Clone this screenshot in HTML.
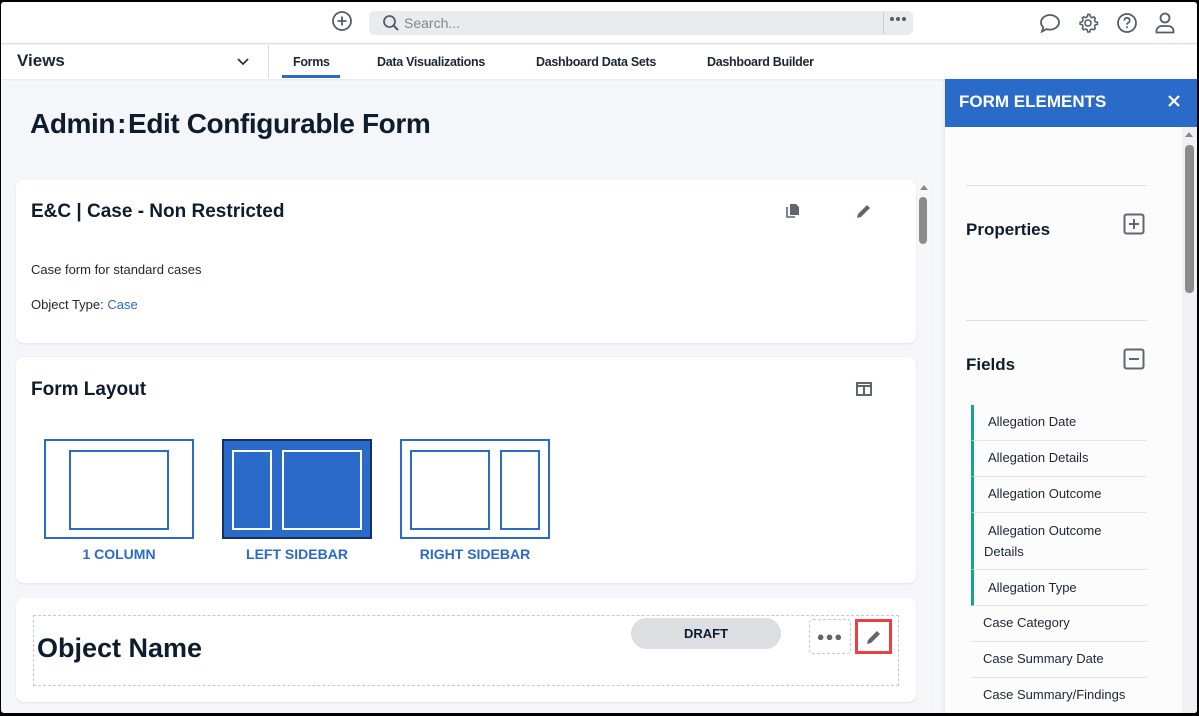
<!DOCTYPE html>
<html><head><meta charset="utf-8"><style>
*{box-sizing:border-box;margin:0;padding:0}
body{width:1199px;height:716px;background:#000;position:relative;overflow:hidden;font-family:"Liberation Sans",sans-serif;color:#0f1c2e}
#pg{position:absolute;left:1px;top:2px;width:1196px;height:711px;background:#f5f6f9;overflow:hidden;border-radius:3px}
.abs{position:absolute}
#top{left:0;top:0;width:1196px;height:42px;background:#fff;border-bottom:1px solid #dcdde0}
#nav{left:0;top:43px;width:1196px;height:34px;background:#fff;box-shadow:0 1px 2px rgba(0,0,0,.06)}
.tab{position:absolute;top:10px;font-size:12.5px;font-weight:bold;color:#1c2633;letter-spacing:-.3px}
.card{position:absolute;left:15px;width:900px;background:#fff;border-radius:8px;box-shadow:0 1px 2px rgba(0,0,0,.08)}
.lay{position:absolute;top:437px;width:150px;height:100px;border:2px solid #2a6ac8;background:#fff}
.lab{position:absolute;top:544px;font-size:14px;font-weight:bold;color:#2a6ac8;text-align:center;width:150px}
.in{position:absolute;border:2px solid #2a6ac8}
.fld{position:absolute;left:970px;width:176px;border-bottom:1px solid #e3e4e7;font-size:13px;color:#1c2633;padding-left:14px}
.g{border-left:3px solid #14a38b}
</style></head><body><div id="pg">
<div id="top" class="abs">
<svg class="abs" style="left:330px;top:8px" width="22" height="22" viewBox="0 0 22 22"><circle cx="11" cy="11" r="9" fill="none" stroke="#555c66" stroke-width="1.8"/><path d="M11 6.5v9M6.5 11h9" stroke="#555c66" stroke-width="1.8"/></svg>
<div class="abs" style="left:368px;top:9px;width:544px;height:24px;background:#e9ebee;border-radius:5px"></div>
<svg class="abs" style="left:381px;top:12px" width="18" height="18" viewBox="0 0 18 18"><circle cx="7.5" cy="7.5" r="5.5" fill="none" stroke="#555c66" stroke-width="1.8"/><path d="M11.5 11.5l4.5 4.5" stroke="#555c66" stroke-width="2"/></svg>
<div class="abs" style="left:403px;top:13px;font-size:14px;color:#80868f">Search...</div>
<div class="abs" style="left:882px;top:10px;width:1px;height:22px;background:#c9ccd1"></div>
<div class="abs" style="left:889px;top:15px;width:18px;height:4px">
<span class="abs" style="left:0;top:0;width:4px;height:4px;border-radius:2px;background:#555c66"></span>
<span class="abs" style="left:6px;top:0;width:4px;height:4px;border-radius:2px;background:#555c66"></span>
<span class="abs" style="left:12px;top:0;width:4px;height:4px;border-radius:2px;background:#555c66"></span></div>
<svg class="abs" style="left:1037px;top:10px" width="24" height="22" viewBox="0 0 24 22"><path d="M12 3c5 0 9 3.3 9 7.3s-4 7.3-9 7.3c-1.2 0-2.4-.2-3.4-.5L4 19.5l1.3-4C3.8 14 3 12.2 3 10.3 3 6.3 7 3 12 3z" fill="none" stroke="#555c66" stroke-width="1.8"/></svg>
<svg class="abs" style="left:1076px;top:10px" width="22" height="22" viewBox="0 0 24 24"><path d="M12 2.5l2 .3.6 2.4 1.6.9 2.3-.8 1.4 1.5-.8 2.3.8 1.6 2.4.6v2.2l-2.4.6-.8 1.6.8 2.3-1.5 1.4-2.3-.8-1.6.8-.6 2.4h-2.2l-.6-2.4-1.6-.8-2.3.8-1.4-1.5.8-2.3-.8-1.6-2.4-.6v-2.2l2.4-.6.8-1.6-.8-2.3 1.5-1.4 2.3.8 1.6-.9.6-2.4z" fill="none" stroke="#555c66" stroke-width="1.7"/><circle cx="12" cy="12" r="3.3" fill="none" stroke="#555c66" stroke-width="1.7"/></svg>
<svg class="abs" style="left:1115px;top:10px" width="22" height="22" viewBox="0 0 22 22"><circle cx="11" cy="11" r="9" fill="none" stroke="#555c66" stroke-width="1.8"/><path d="M8.3 8.5a2.7 2.7 0 1 1 3.8 2.4c-.7.4-1.1.9-1.1 1.7" fill="none" stroke="#555c66" stroke-width="1.7"/><circle cx="11" cy="15.3" r="1" fill="#555c66"/></svg>
<svg class="abs" style="left:1153px;top:9px" width="22" height="24" viewBox="0 0 22 24"><circle cx="11" cy="7" r="4.5" fill="none" stroke="#555c66" stroke-width="1.8"/><path d="M2.5 21.5v-1.5c0-3 2.5-5 5.5-5h6c3 0 5.5 2 5.5 5v1.5z" fill="none" stroke="#555c66" stroke-width="1.8"/></svg>
</div>
<div id="nav" class="abs">
<div class="abs" style="left:16px;top:6px;font-size:17px;font-weight:bold;color:#1c2633">Views</div>
<svg class="abs" style="left:235px;top:12px" width="14" height="10" viewBox="0 0 14 10"><path d="M2 2l5 5 5-5" fill="none" stroke="#333" stroke-width="1.8"/></svg>
<div class="abs" style="left:267px;top:0;width:1px;height:33px;background:#dcdde0"></div>
<div class="tab" style="left:292px">Forms</div>
<div class="abs" style="left:281px;top:30px;width:58px;height:3px;background:#2a6ac8"></div>
<div class="tab" style="left:376px">Data Visualizations</div>
<div class="tab" style="left:535px">Dashboard Data Sets</div>
<div class="tab" style="left:706px">Dashboard Builder</div>
</div>
<div class="abs" style="left:29px;top:106px;font-size:28px;font-weight:bold;color:#0f1c2e;letter-spacing:-.4px">Admin<span style="margin:0 2px">:</span>Edit Configurable Form</div>
<div class="card" style="top:178px;height:163px">
<div class="abs" style="left:15px;top:21px;font-size:19px;font-weight:bold">E&amp;C | Case - Non Restricted</div>
<svg class="abs" style="left:770px;top:23px" width="14" height="15" viewBox="0 0 14 15"><path d="M1 4v10h8" fill="none" stroke="#5f6670" stroke-width="1.6"/><path d="M4 1h6l3 3v8H4z" fill="#5f6670"/></svg>
<svg class="abs" style="left:840px;top:23px" width="16" height="16" viewBox="0 0 16 16"><path d="M1 15l1-4 9-9 3 3-9 9z" fill="#5f6670"/></svg>
<div class="abs" style="left:15px;top:82px;font-size:13px;color:#1c2633">Case form for standard cases</div>
<div class="abs" style="left:15px;top:117px;font-size:13px;color:#1c2633">Object Type: <span style="color:#2a6ac8">Case</span></div>
</div>
<div class="card" style="top:355px;height:226px">
<div class="abs" style="left:15px;top:22px;font-size:19px;font-weight:bold">Form Layout</div>
<svg class="abs" style="left:840px;top:25px" width="16" height="14" viewBox="0 0 16 14"><rect x="1" y="1" width="14" height="12" fill="none" stroke="#5f6670" stroke-width="2"/><path d="M1 4h14M8 4v9" stroke="#5f6670" stroke-width="2"/></svg>
</div>
<div class="lay" style="left:43px"><div class="in" style="left:23px;top:9px;width:100px;height:80px"></div></div>
<div class="lab" style="left:43px">1 COLUMN</div>
<div class="lay" style="left:221px;background:#2a6ac8;border-color:#14315f"><div class="in" style="left:8px;top:9px;width:40px;height:80px;border-color:#fff"></div><div class="in" style="left:58px;top:9px;width:80px;height:80px;border-color:#fff"></div></div>
<div class="lab" style="left:221px">LEFT SIDEBAR</div>
<div class="lay" style="left:399px"><div class="in" style="left:8px;top:9px;width:80px;height:80px"></div><div class="in" style="left:98px;top:9px;width:40px;height:80px"></div></div>
<div class="lab" style="left:399px">RIGHT SIDEBAR</div>
<div class="card" style="top:596px;height:104px">
<div class="abs" style="left:17px;top:17px;width:866px;height:71px;border:1px dashed #c8c9cc"></div>
<div class="abs" style="left:21px;top:35px;font-size:27px;font-weight:bold">Object Name</div>
<div class="abs" style="left:615px;top:20px;width:150px;height:31px;border-radius:16px;background:#dcdee1;font-size:13px;font-weight:bold;text-align:center;line-height:31px">DRAFT</div>
<div class="abs" style="left:793px;top:21px;width:42px;height:35px;border:1px dashed #c8c9cc;border-radius:4px;text-align:center;line-height:33px;font-size:13px;color:#5f6670;letter-spacing:1px;font-weight:bold">●●●</div>
<div class="abs" style="left:839px;top:21px;width:37px;height:35px;border:3px solid #ef3e42"></div>
<svg class="abs" style="left:850px;top:31px" width="16" height="16" viewBox="0 0 16 16"><path d="M1 15l1-4 9-9 3 3-9 9z" fill="#5f6670"/></svg>
</div>
<div class="abs" style="left:917px;top:178px;width:13px;height:533px;background:#f7f7f9"></div>
<div class="abs" style="left:919px;top:183px;width:0;height:0;border:4px solid transparent;border-bottom:5px solid #888;border-top:0"></div>
<div class="abs" style="left:918px;top:195px;width:8px;height:47px;background:#8b8b8b;border-radius:4px"></div>
<div class="abs" style="left:944px;top:77px;width:252px;height:640px;background:#fcfcfd;box-shadow:-1px 0 3px rgba(0,0,0,.08)"></div>
<div class="abs" style="left:944px;top:77px;width:252px;height:48px;background:#2a6ac8"></div>
<div class="abs" style="left:958px;top:90px;font-size:17px;font-weight:bold;color:#fff">FORM ELEMENTS</div>
<svg class="abs" style="left:1166px;top:92px" width="14" height="14" viewBox="0 0 14 14"><path d="M2 2l10 10M12 2L2 12" stroke="#fff" stroke-width="2.2"/></svg>
<div class="abs" style="left:1181px;top:125px;width:15px;height:590px;background:#f1f1f3"></div>
<div class="abs" style="left:1184px;top:130px;width:0;height:0;border:4px solid transparent;border-bottom:5px solid #888;border-top:0"></div>
<div class="abs" style="left:1184px;top:143px;width:9px;height:148px;background:#8b8b8b;border-radius:4px"></div>
<div class="abs" style="left:965px;top:183px;width:181px;height:1px;background:#e0e1e4"></div>
<div class="abs" style="left:965px;top:218px;font-size:17px;font-weight:bold">Properties</div>
<svg class="abs" style="left:1122px;top:211px" width="22" height="22" viewBox="0 0 22 22"><rect x="1.5" y="1.5" width="19" height="19" rx="2" fill="none" stroke="#5f6670" stroke-width="2"/><path d="M11 6v10M6 11h10" stroke="#5f6670" stroke-width="2"/></svg>
<div class="abs" style="left:965px;top:318px;width:181px;height:1px;background:#e0e1e4"></div>
<div class="abs" style="left:965px;top:353px;font-size:17px;font-weight:bold">Fields</div>
<svg class="abs" style="left:1122px;top:346px" width="22" height="22" viewBox="0 0 22 22"><rect x="1.5" y="1.5" width="19" height="19" rx="2" fill="none" stroke="#5f6670" stroke-width="2"/><path d="M6 11h10" stroke="#5f6670" stroke-width="2"/></svg>
<div class="fld g" style="top:403px;height:36px;padding-top:9px">Allegation Date</div>
<div class="fld g" style="top:439px;height:36px;padding-top:9px">Allegation Details</div>
<div class="fld g" style="top:475px;height:36px;padding-top:9px">Allegation Outcome</div>
<div class="fld g" style="top:511px;height:57px;padding-top:7px;line-height:21px"> Allegation Outcome<br><span style="margin-left:-4px">Details</span></div>
<div class="fld g" style="top:568px;height:36px;padding-top:10px">Allegation Type</div>
<div class="fld" style="top:604px;height:36px;padding-top:9px;padding-left:12px">Case Category</div>
<div class="fld" style="top:640px;height:36px;padding-top:9px;padding-left:12px">Case Summary Date</div>
<div class="fld" style="top:676px;height:36px;padding-top:9px;padding-left:12px">Case Summary/Findings</div>
</div></body></html>
